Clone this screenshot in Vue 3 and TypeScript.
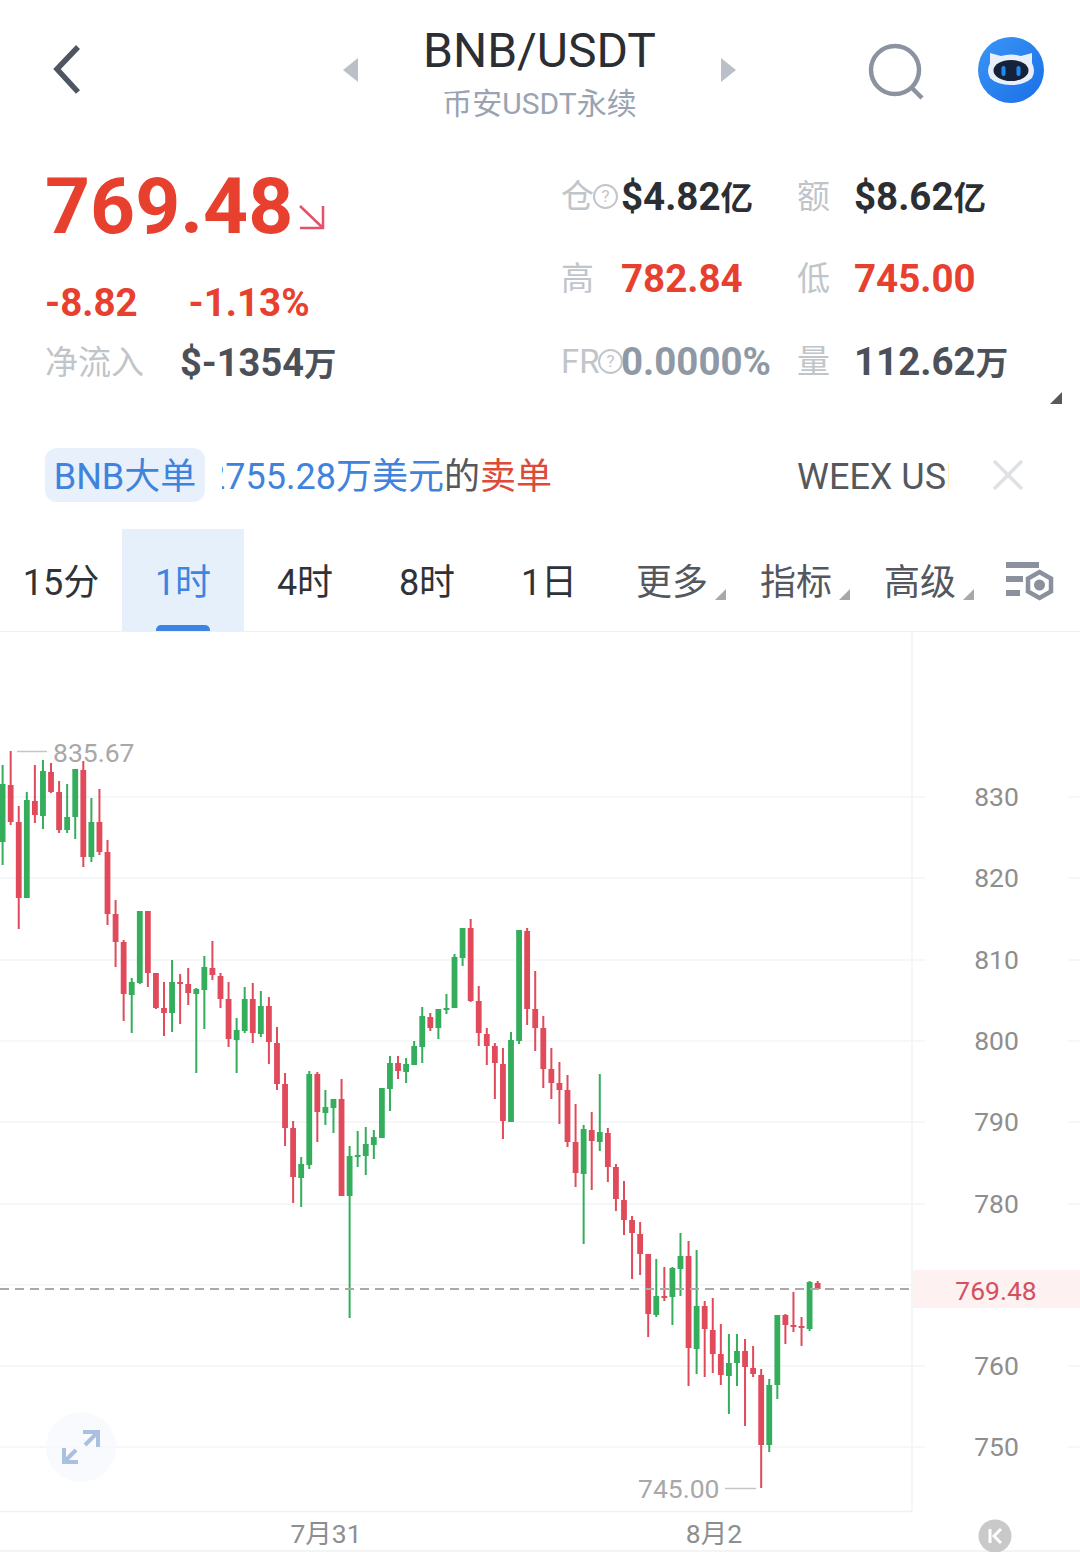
<template>
  <div class="page">
    <header class="header">
      <svg class="back" width="28" height="52" viewBox="0 0 28 52">
        <path d="M25 3 L4 25 L25 48" fill="none" stroke="#4f5663" stroke-width="5.5" />
      </svg>
      <span class="nav-arrow prev"></span>
      <div class="title-box">
        <div class="title">BNB/USDT</div>
        <div class="subtitle">币安USDT永续</div>
      </div>
      <span class="nav-arrow next"></span>
      <svg class="search" width="60" height="60" viewBox="0 0 60 60">
        <circle cx="28" cy="28" r="24" fill="none" stroke="#8b93a0" stroke-width="4.5" />
        <path d="M44 45 L55 56" stroke="#8b93a0" stroke-width="4.5" />
      </svg>
      <svg class="robot" width="68" height="68" viewBox="0 0 68 68">
        <defs>
          <linearGradient id="robotBg" x1="0" y1="0" x2="1" y2="1">
            <stop offset="0" stop-color="#3a96f5" />
            <stop offset="1" stop-color="#1a6fe8" />
          </linearGradient>
        </defs>
        <circle cx="34" cy="34" r="33" fill="url(#robotBg)" />
        <path d="M13 17 L24 20 Q34 17 44 20 L55 17 L55 27 Q59 35 55 42 Q47 49 34 49 Q20 49 13 42 Q9 35 13 27 Z" fill="#e9eff8" />
        <ellipse cx="34" cy="34.5" rx="17.5" ry="10.5" fill="#16223a" />
        <rect x="24.5" y="30" width="4" height="10" rx="2" fill="#1e8bf5" />
        <rect x="39.5" y="30" width="4" height="10" rx="2" fill="#1e8bf5" />
      </svg>
    </header>

    <section class="stats">
      <div class="stats-left">
        <div class="price-line">
          <span class="price">769.48</span>
          <svg class="trend" width="28" height="26" viewBox="0 0 28 26">
            <path d="M2 2 L25 24 M25 2 V24 H2" fill="none" stroke="#e6506a" stroke-width="2.5" />
          </svg>
        </div>
        <div class="change-line">
          <span>-8.82</span>
          <span>-1.13%</span>
        </div>
        <div class="inflow-line">
          <span class="label">净流入</span>
          <span class="value dark">$-1354<small>万</small></span>
        </div>
      </div>
      <div class="stats-grid">
        <span class="label">仓<i class="help">?</i></span>
        <span class="value black">$4.82<small>亿</small></span>
        <span class="label">额</span>
        <span class="value black">$8.62<small>亿</small></span>

        <span class="label">高</span>
        <span class="value red">782.84</span>
        <span class="label">低</span>
        <span class="value red">745.00</span>

        <span class="label">FR<i class="help fr">?</i></span>
        <span class="value muted">0.0000%</span>
        <span class="label">量</span>
        <span class="value dark">112.62<small>万</small></span>
      </div>
      <span class="corner"></span>
    </section>

    <section class="ticker">
      <span class="ticker-tag">BNB大单</span>
      <div class="ticker-clip main">
        <span class="blue">2755.28万美元</span><span class="gray">的</span><span class="red">卖单</span>
      </div>
      <div class="ticker-clip second">WEEX USDT</div>
      <svg class="close" width="32" height="32" viewBox="0 0 32 32">
        <path d="M2 2 L30 30 M30 2 L2 30" stroke="#dfe2e5" stroke-width="3.5" />
      </svg>
    </section>

    <nav class="tabs">
      <div v-for="tab in tabs" :key="tab.name" class="tab" :class="{ active: tab.active, more: tab.more }">
        {{ tab.name }}
        <span v-if="tab.more" class="tab-corner"></span>
      </div>
      <svg class="tab-settings" width="50" height="44" viewBox="0 0 50 44">
        <rect x="1" y="1" width="33" height="6" fill="#8a909c" />
        <rect x="1" y="15" width="17" height="6" fill="#8a909c" />
        <rect x="1" y="29" width="14" height="6" fill="#8a909c" />
        <path d="M34.5 11 L46 17.5 V30.5 L34.5 37 L23 30.5 V17.5 Z" fill="none" stroke="#8a909c" stroke-width="4.5" />
        <circle cx="34.5" cy="24" r="5.5" fill="#8a909c" />
      </svg>
    </nav>

    <svg class="chart" width="1080" height="921" viewBox="0 631 1080 921">
      <line x1="0" y1="631.5" x2="1080" y2="631.5" stroke="#eef0f2" />
      <line x1="912" y1="631" x2="912" y2="1511" stroke="#f1f2f4" stroke-width="1.5" />
      <line x1="0" y1="1511.5" x2="912" y2="1511.5" stroke="#eef0f2" stroke-width="1.5" />
      <line x1="0" y1="1551" x2="1080" y2="1551" stroke="#eef0f2" stroke-width="1.5" />

      <g v-for="g in gridLines" :key="g.y">
        <line x1="0" :y1="g.y" x2="925" :y2="g.y" stroke="#f3f4f6" stroke-width="1.5" />
        <line x1="1068" :y1="g.y" x2="1080" :y2="g.y" stroke="#f3f4f6" stroke-width="1.5" />
        <text v-if="g.label" class="axis" x="996.5" :y="g.y + 9" text-anchor="middle">{{ g.label }}</text>
      </g>

      <circle cx="81" cy="1447" r="35" fill="#f5f8fd" fill-opacity="0.75" />
      <path d="M83 1432 H98 V1447 M98 1432 L85 1445 M64 1448 V1462 H78 M64 1462 L76 1450" fill="none" stroke="#a9c0e0" stroke-width="4" />

      <g v-for="c in bars" :key="c.x" :fill="c.color">
        <rect :x="c.x - 1" :y="c.hi" width="2" :height="c.lo - c.hi" />
        <rect :x="c.x - 2.9" :y="c.top" width="5.8" :height="c.bot - c.top" />
      </g>

      <line x1="0" y1="1289" x2="910" y2="1289" stroke="#a9a9a9" stroke-width="2" stroke-dasharray="9 6" />
      <rect x="913" y="1270" width="167" height="38" fill="#fdf1f1" />
      <text class="axis last" x="996" y="1300" text-anchor="middle">769.48</text>

      <line x1="17" y1="751.5" x2="47" y2="751.5" stroke="#c4c4c4" stroke-width="1.5" />
      <text class="axis soft" x="53" y="761.5">835.67</text>
      <line x1="725" y1="1488.5" x2="756" y2="1488.5" stroke="#c4c4c4" stroke-width="1.5" />
      <text class="axis soft" x="638" y="1498">745.00</text>

      <text class="axis" x="326" y="1543" text-anchor="middle">7月31</text>
      <text class="axis" x="714" y="1543" text-anchor="middle">8月2</text>

      <circle cx="995" cy="1536" r="16.5" fill="#c9c9c9" />
      <path d="M990 1529 V1543 M1001 1529 L994 1536 L1001 1543" fill="none" stroke="#fff" stroke-width="3" />
    </svg>
  </div>
</template>

<script setup lang="ts">
import { computed } from 'vue'

type Candle = [number, number, number, number, number] // up, high, top, bottom, low

const RED = '#e04a5b'
const GREEN = '#34ad5c'

const tabs = [
  { name: '15分' },
  { name: '1时', active: true },
  { name: '4时' },
  { name: '8时' },
  { name: '1日' },
  { name: '更多', more: true },
  { name: '指标', more: true },
  { name: '高级', more: true }
]

const gridLines = [
  { y: 797, label: '830' },
  { y: 878, label: '820' },
  { y: 960, label: '810' },
  { y: 1041, label: '800' },
  { y: 1122, label: '790' },
  { y: 1204, label: '780' },
  { y: 1285, label: '' },
  { y: 1366, label: '760' },
  { y: 1447, label: '750' }
]

const candles: Candle[] = [
  [1, 765, 784, 842, 865], [0, 751, 785, 822, 825], [0, 806, 822, 898, 929], [1, 792, 800, 898, 898],
  [0, 765, 801, 815, 823], [1, 760, 771, 816, 829], [0, 763, 772, 792, 793], [0, 781, 792, 830, 833],
  [1, 784, 817, 830, 833], [1, 769, 769, 817, 839], [0, 761, 770, 857, 867], [1, 798, 822, 857, 862],
  [0, 789, 822, 852, 855], [0, 840, 852, 914, 925], [0, 900, 914, 942, 967], [0, 940, 942, 994, 1021],
  [1, 978, 982, 995, 1033], [1, 911, 911, 983, 984], [0, 911, 911, 973, 987], [0, 973, 973, 1008, 1009],
  [0, 982, 1008, 1013, 1036], [1, 960, 982, 1013, 1032], [0, 974, 982, 984, 1024], [0, 968, 984, 993, 1005],
  [1, 988, 989, 994, 1073], [1, 956, 967, 990, 1029], [0, 941, 968, 975, 980], [0, 973, 976, 999, 1008],
  [0, 982, 999, 1039, 1047], [1, 1018, 1030, 1040, 1073], [1, 987, 999, 1031, 1033], [0, 983, 999, 1033, 1043],
  [1, 991, 1006, 1034, 1037], [0, 997, 1006, 1042, 1064], [0, 1027, 1043, 1084, 1090], [0, 1073, 1084, 1128, 1146],
  [0, 1121, 1128, 1177, 1203], [1, 1157, 1164, 1178, 1207], [1, 1071, 1074, 1165, 1169], [0, 1072, 1074, 1112, 1142],
  [1, 1090, 1107, 1113, 1125], [1, 1099, 1099, 1108, 1133], [0, 1079, 1099, 1196, 1196], [1, 1146, 1156, 1196, 1318],
  [1, 1131, 1155, 1157, 1167], [1, 1127, 1144, 1156, 1175], [1, 1130, 1137, 1145, 1159], [1, 1088, 1088, 1138, 1138],
  [1, 1056, 1063, 1089, 1111], [0, 1056, 1063, 1071, 1079], [1, 1058, 1064, 1072, 1083], [1, 1041, 1046, 1065, 1065],
  [1, 1007, 1016, 1047, 1063], [0, 1013, 1017, 1028, 1031], [1, 1009, 1009, 1028, 1039], [1, 994, 1008, 1010, 1014],
  [1, 954, 957, 1008, 1008], [1, 928, 928, 958, 966], [0, 919, 928, 1001, 1002], [0, 986, 1001, 1033, 1046],
  [0, 1028, 1034, 1046, 1065], [0, 1043, 1046, 1063, 1099], [0, 1048, 1064, 1121, 1139], [1, 1032, 1040, 1122, 1122],
  [1, 930, 930, 1041, 1044], [0, 928, 931, 1009, 1025], [0, 971, 1009, 1028, 1051], [0, 1016, 1028, 1069, 1088],
  [0, 1048, 1069, 1083, 1099], [0, 1062, 1083, 1090, 1124], [0, 1075, 1090, 1142, 1147], [0, 1104, 1142, 1173, 1187],
  [1, 1125, 1129, 1174, 1244], [0, 1112, 1130, 1141, 1190], [1, 1074, 1132, 1142, 1151], [0, 1128, 1133, 1167, 1182],
  [0, 1164, 1167, 1199, 1211], [0, 1181, 1200, 1220, 1235], [0, 1216, 1220, 1233, 1279], [0, 1222, 1234, 1254, 1275],
  [0, 1254, 1254, 1314, 1337], [1, 1259, 1296, 1315, 1317], [0, 1267, 1296, 1298, 1301], [1, 1267, 1268, 1297, 1325],
  [1, 1233, 1256, 1269, 1296], [0, 1241, 1256, 1348, 1386], [1, 1250, 1306, 1349, 1374], [0, 1301, 1306, 1329, 1377],
  [0, 1298, 1330, 1354, 1373], [0, 1324, 1354, 1375, 1385], [1, 1334, 1363, 1376, 1414], [1, 1334, 1351, 1363, 1386],
  [0, 1339, 1351, 1367, 1426], [0, 1346, 1368, 1374, 1377], [0, 1369, 1375, 1445, 1488], [1, 1379, 1385, 1445, 1452],
  [1, 1315, 1315, 1385, 1399], [0, 1314, 1315, 1325, 1344], [0, 1292, 1325, 1327, 1332], [0, 1317, 1326, 1328, 1346],
  [1, 1281, 1282, 1329, 1331], [0, 1281, 1283, 1289, 1289]
]

const bars = computed(() =>
  candles.map(([up, hi, top, bot, lo], i) => ({
    x: +(2.6 + 8.07 * i).toFixed(2),
    color: up ? GREEN : RED,
    hi,
    top,
    bot,
    lo
  }))
)
</script>

<style>
html,
body {
  margin: 0;
  background: #fff;
}
</style>

<style scoped>
.page {
  position: relative;
  width: 1080px;
  height: 1563px;
  overflow: hidden;
  background: #fff;
  font-family: Roboto, "Noto Sans CJK SC", sans-serif;
}

.header {
  display: flex;
  align-items: center;
  height: 140px;
}
.back {
  margin-left: 53px;
}
.nav-arrow {
  width: 15px;
  height: 24px;
  background: #b9c0c7;
}
.nav-arrow.prev {
  margin-left: 262px;
  clip-path: polygon(100% 0, 100% 100%, 0 50%);
}
.nav-arrow.next {
  clip-path: polygon(0 0, 100% 50%, 0 100%);
}
.title-box {
  width: 363px;
  text-align: center;
  margin-top: 7px;
}
.title {
  font-size: 48px;
  line-height: 56px;
  color: #2b2e33;
}
.subtitle {
  font-size: 30px;
  line-height: 40px;
  margin-top: 5px;
  color: #9aa3b1;
}
.search {
  margin-left: 131px;
  margin-top: 3px;
}
.robot {
  margin-left: 50px;
}

.stats {
  position: relative;
  display: flex;
  height: 308px;
  font-size: 38.5px;
  line-height: 44px;
}
.stats-left {
  width: 561px;
  padding: 26px 0 0 45px;
  box-sizing: border-box;
}
.price-line {
  display: flex;
  height: 80px;
}
.price {
  font-size: 78.6px;
  line-height: 80px;
  font-weight: 700;
  color: #e8402f;
}
.trend {
  margin: 38px 0 0 5px;
}
.change-line {
  display: flex;
  gap: 51px;
  margin-top: 35px;
  font-weight: 700;
  color: #e8402f;
}
.inflow-line {
  display: flex;
  gap: 36px;
  margin-top: 16px;
  font-size: 38px;
}
.stats-grid {
  display: grid;
  grid-template-columns: 60px 176px 57px 1fr;
  grid-auto-rows: 44px;
  row-gap: 38.4px;
  align-content: start;
  padding-top: 35px;
}
.label {
  position: relative;
  font-size: 33px;
  color: #c0c5ca;
  white-space: nowrap;
}
.value {
  font-weight: 700;
  white-space: nowrap;
}
.value small {
  font-size: 32.5px;
}
.black {
  color: #2b2e33;
}
.dark {
  color: #4c5058;
}
.red {
  color: #e8402f;
}
.muted {
  color: #8f99a5;
}
.help {
  position: absolute;
  left: 32px;
  top: 9px;
  width: 21px;
  height: 21px;
  border: 2px solid #c0c5ca;
  border-radius: 50%;
  font-size: 17px;
  line-height: 21px;
  font-style: normal;
  text-align: center;
}
.help.fr {
  left: 37px;
}
.corner {
  position: absolute;
  right: 18px;
  top: 252px;
  width: 12px;
  height: 12px;
  background: #555a61;
  clip-path: polygon(100% 0, 100% 100%, 0 100%);
}

.ticker {
  display: flex;
  align-items: center;
  height: 54px;
  padding-left: 45px;
  font-size: 36px;
  line-height: 58px;
}
.ticker-tag {
  width: 160px;
  height: 54px;
  border-radius: 12px;
  background: #e8f1fb;
  color: #3f83dc;
  text-align: center;
}
.ticker-clip {
  height: 54px;
  overflow: hidden;
  white-space: nowrap;
}
.ticker-clip.main {
  width: 340px;
  margin-left: 17px;
  text-indent: -17px;
}
.ticker-clip.second {
  width: 152px;
  margin-left: 235px;
  color: #55585d;
}
.blue {
  color: #3f83dc;
}
.gray {
  color: #55585d;
}
.ticker .red {
  color: #dd4a38;
}
.close {
  margin-left: 43px;
}

.tabs {
  display: flex;
  align-items: center;
  height: 102px;
  margin-top: 27px;
  font-size: 36px;
  color: #2f3338;
}
.tab {
  position: relative;
  width: 122px;
  height: 102px;
  line-height: 108px;
  text-align: center;
  white-space: nowrap;
}
.tab.active {
  background: #e6f0fb;
  color: #3d85e0;
}
.tab.active::after {
  content: '';
  position: absolute;
  left: 34px;
  bottom: 0;
  width: 54px;
  height: 6px;
  border-radius: 5px 5px 0 0;
  background: #3d85e0;
}
.tab.more {
  width: 124px;
  color: #54585e;
}
.tab-corner {
  position: absolute;
  right: 8px;
  top: 60px;
  width: 11px;
  height: 11px;
  background: #a8a8a8;
  clip-path: polygon(100% 0, 100% 100%, 0 100%);
}
.tab-settings {
  margin-left: 23px;
  margin-top: 6px;
}

.chart {
  display: block;
}
.axis {
  font-size: 26.5px;
  fill: #8e8e8e;
}
.axis.soft {
  fill: #a8a8a8;
}
.axis.last {
  fill: #d5505f;
}
</style>
